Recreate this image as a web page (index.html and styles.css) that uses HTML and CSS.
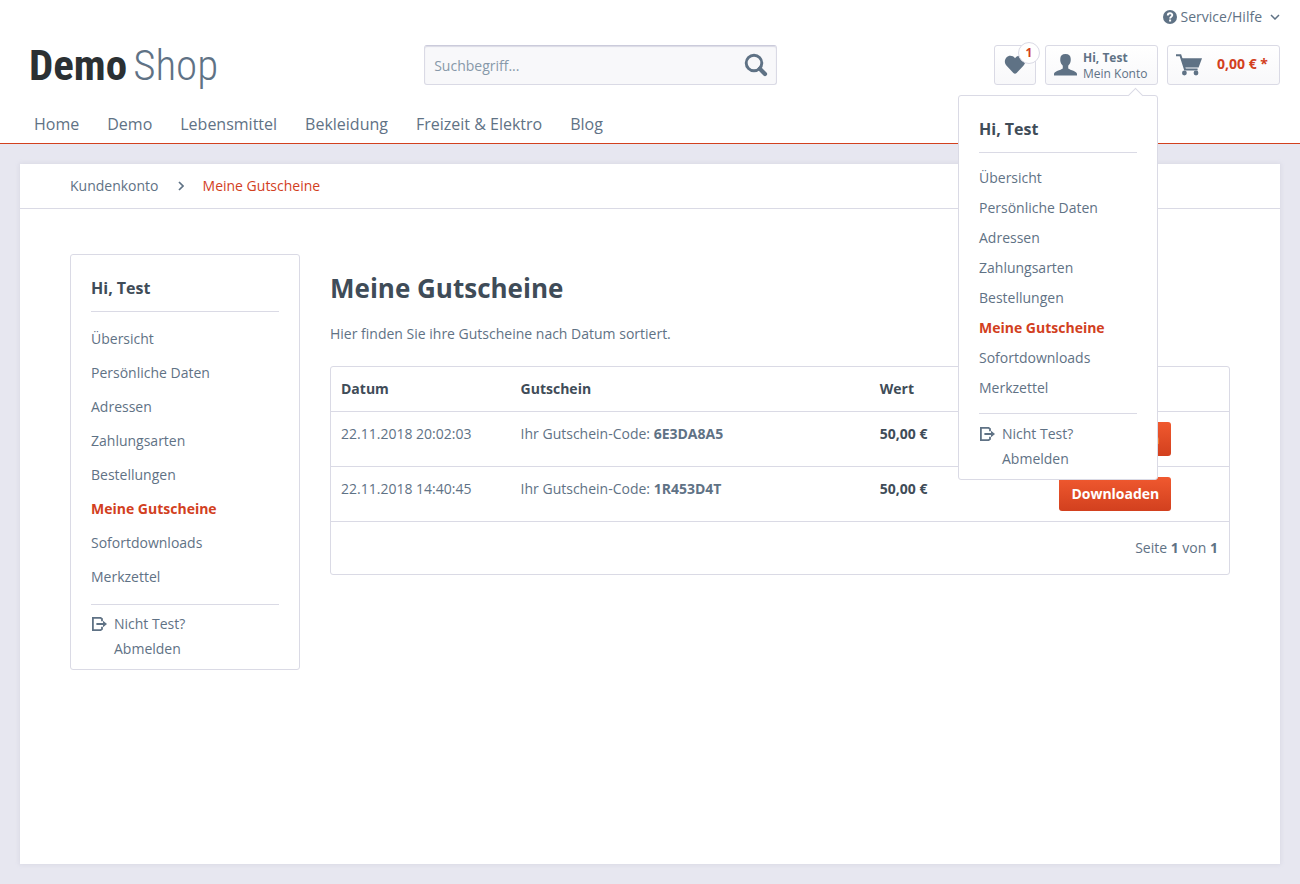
FILE: index.html
```html
<!DOCTYPE html>
<html lang="de">
<head>
<meta charset="utf-8">
<meta name="viewport" content="width=device-width, initial-scale=1">
<title>Meine Gutscheine | DemoShop</title>
<link rel="stylesheet" href="styles.css">
</head>
<body>
<header class="header">
  <div class="topbar">
    <button class="service" type="button">
      <svg width="14" height="14" viewBox="0 0 14 14" aria-hidden="true"><circle cx="7" cy="7" r="7" fill="currentColor"/><path d="M4.8 5.4C4.8 2.5 9.3 2.5 9.3 5.1C9.3 6.8 7.1 6.6 7.1 8.5" fill="none" stroke="#fff" stroke-width="1.9"/><rect x="6.1" y="9.5" width="2" height="2" fill="#fff"/></svg>
      <span>Service/Hilfe</span>
      <svg class="service-arrow" width="10" height="6" viewBox="0 0 10 6" aria-hidden="true"><path d="M1 1l4 4 4-4" fill="none" stroke="currentColor" stroke-width="1.5"/></svg>
    </button>
  </div>
  <div class="header-main">
    <a class="logo" href="#"><b>Demo</b><span>Shop</span></a>
    <form class="search" role="search">
      <input class="search-field" type="search" placeholder="Suchbegriff..." aria-label="Suchbegriff">
      <button class="search-button" type="button" aria-label="Suchen">
        <svg width="24" height="24" viewBox="0 0 24 24" fill="none" stroke="currentColor" aria-hidden="true"><circle cx="10" cy="10" r="7.8" stroke-width="2.9"/><path d="M15.8 15.8l5.2 5.2" stroke-width="4.2" stroke-linecap="round"/></svg>
      </button>
    </form>
    <div class="actions">
      <a class="action wishlist" href="#" aria-label="Merkzettel">
        <svg width="22" height="20" viewBox="0 0 22 20" fill="currentColor" aria-hidden="true"><path d="M11 3.2C8.8.2 4.6.1 2.4 2.5C.2 5 .4 8.4 2.6 10.8L9.4 18Q11 19.6 12.6 18L19.4 10.8C21.6 8.4 21.8 5 19.6 2.5C17.4.1 13.2.2 11 3.2Z"/></svg>
        <span class="badge">1</span>
      </a>
      <div class="account">
        <button class="action account-button" type="button" aria-expanded="true">
          <svg width="23" height="22" viewBox="0 0 22 22" preserveAspectRatio="none" fill="currentColor" aria-hidden="true"><path d="M11 0C14.2 0 16 1.8 16 4.8C16 6 16.1 6.6 15.8 7.8C15.4 9.6 14.6 10.6 13.6 11.8V14.6C15.6 16.3 22 17.4 22 20V21.5H0V20C0 17.4 6.4 16.3 8.4 14.6V11.8C7.4 10.6 6.6 9.6 6.2 7.8C5.9 6.6 6 6 6 4.8C6 1.8 7.8 0 11 0Z"/></svg>
          <span class="account-label"><b>Hi, Test</b><span>Mein Konto</span></span>
        </button>
        <nav class="menu dropdown" aria-label="Mein Konto">
          <h2 class="menu-title">Hi, Test</h2>
          <ul class="menu-list">
            <li><a href="#">Übersicht</a></li>
            <li><a href="#">Persönliche Daten</a></li>
            <li><a href="#">Adressen</a></li>
            <li><a href="#">Zahlungsarten</a></li>
            <li><a href="#">Bestellungen</a></li>
            <li><a class="active" href="#">Meine Gutscheine</a></li>
            <li><a href="#">Sofortdownloads</a></li>
            <li><a href="#">Merkzettel</a></li>
          </ul>
          <a class="logout" href="#">
            <svg width="15" height="14" viewBox="0 0 15 14" fill="none" stroke="currentColor" stroke-width="1.8" aria-hidden="true"><path d="M10 4.2V2L8.6.9H.9v12.2h7.7L10 12V9.8M4.4 7h8"/><path d="M11 3.8L15 7l-4 3.2z" fill="currentColor" stroke="none"/></svg>
            <span>Nicht Test?<br>Abmelden</span>
          </a>
        </nav>
      </div>
      <a class="action cart" href="#">
        <svg width="26" height="22" viewBox="0 0 26 22" aria-hidden="true"><path d="M0 1.2h4.4L9 15.4h12.6" fill="none" stroke="currentColor" stroke-width="2"/><path d="M5.6 4.2H26l-3.4 9.4H8.6z" fill="currentColor"/><circle cx="8.4" cy="19" r="2.4" fill="currentColor"/><circle cx="20" cy="19" r="2.4" fill="currentColor"/></svg>
        <span>0,00 € *</span>
      </a>
    </div>
  </div>
  <nav class="navigation" aria-label="Kategorien">
    <a href="#">Home</a>
    <a href="#">Demo</a>
    <a href="#">Lebensmittel</a>
    <a href="#">Bekleidung</a>
    <a href="#">Freizeit &amp; Elektro</a>
    <a href="#">Blog</a>
  </nav>
</header>
<main class="page">
  <nav class="breadcrumb" aria-label="Brotkrumen">
    <a href="#">Kundenkonto</a>
    <svg width="6" height="10" viewBox="0 0 6 10" aria-hidden="true"><path d="M1 1l4 4-4 4" fill="none" stroke="currentColor" stroke-width="1.7"/></svg>
    <a class="current" href="#" aria-current="page">Meine Gutscheine</a>
  </nav>
  <div class="content">
    <aside class="menu sidebar">
      <h2 class="menu-title">Hi, Test</h2>
      <ul class="menu-list">
        <li><a href="#">Übersicht</a></li>
        <li><a href="#">Persönliche Daten</a></li>
        <li><a href="#">Adressen</a></li>
        <li><a href="#">Zahlungsarten</a></li>
        <li><a href="#">Bestellungen</a></li>
        <li><a class="active" href="#">Meine Gutscheine</a></li>
        <li><a href="#">Sofortdownloads</a></li>
        <li><a href="#">Merkzettel</a></li>
      </ul>
      <a class="logout" href="#">
        <svg width="15" height="14" viewBox="0 0 15 14" fill="none" stroke="currentColor" stroke-width="1.8" aria-hidden="true"><path d="M10 4.2V2L8.6.9H.9v12.2h7.7L10 12V9.8M4.4 7h8"/><path d="M11 3.8L15 7l-4 3.2z" fill="currentColor" stroke="none"/></svg>
        <span>Nicht Test?<br>Abmelden</span>
      </a>
    </aside>
    <section class="vouchers">
      <h1>Meine Gutscheine</h1>
      <p class="intro">Hier finden Sie ihre Gutscheine nach Datum sortiert.</p>
      <div class="panel">
        <table class="voucher-table">
          <colgroup><col class="col-date"><col class="col-voucher"><col class="col-value"><col class="col-action"></colgroup>
          <thead>
            <tr><th scope="col">Datum</th><th scope="col">Gutschein</th><th scope="col">Wert</th><td></td></tr>
          </thead>
          <tbody>
            <tr><td>22.11.2018 20:02:03</td><td>Ihr Gutschein-Code: <b>6E3DA8A5</b></td><td class="value">50,00 €</td><td><button class="download" type="button">Downloaden</button></td></tr>
            <tr><td>22.11.2018 14:40:45</td><td>Ihr Gutschein-Code: <b>1R453D4T</b></td><td class="value">50,00 €</td><td><button class="download" type="button">Downloaden</button></td></tr>
          </tbody>
        </table>
        <p class="paging">Seite <b>1</b> von <b>1</b></p>
      </div>
    </section>
  </div>
</main>
</body>
</html>
```
FILE: styles.css
```css
:root {
  --text: #5f7285;
  --dark: #3f4c58;
  --accent: #d2401e;
  --line: #dadae5;
  --backdrop: #e7e7f0;
}

* {
  box-sizing: border-box;
}

body {
  display: flex;
  flex-direction: column;
  min-height: 100vh;
  margin: 0;
  background: var(--backdrop);
  color: var(--text);
  font: 14px/24px "Open Sans", "Noto Sans", sans-serif;
}

a {
  color: inherit;
  text-decoration: none;
}

button {
  padding: 0;
  border: 0;
  background: none;
  color: inherit;
  font: inherit;
  cursor: pointer;
}

h1,
h2,
p,
ul {
  margin: 0;
  padding: 0;
}

svg {
  flex: none;
}

.header {
  padding: 0 20px;
  border-bottom: 1px solid var(--accent);
  background: #fff;
}

.topbar {
  display: flex;
  justify-content: flex-end;
  padding: 5px 0;
}

.service {
  display: flex;
  align-items: center;
  gap: 4px;
}

.service-arrow {
  margin-left: 4px;
}

.header-main {
  display: flex;
  align-items: center;
  margin-top: 11px;
}

.logo {
  display: flex;
  gap: 6px;
  width: 32%;
  padding-left: 9px;
  color: var(--text);
  font: 300 43px/40px "Roboto Condensed", Roboto, sans-serif;
}

.logo b {
  color: #2b3033;
  font-weight: 700;
}

.search {
  position: relative;
  width: 28%;
  margin-left: 1px;
}

.search-field {
  display: block;
  width: 100%;
  height: 40px;
  padding: 0 50px 0 9px;
  border: 1px solid var(--line);
  border-top-color: #cbcbdb;
  border-radius: 3px;
  background: #f8f8fa;
  box-shadow: inset 0 1px 1px var(--line);
  color: var(--text);
  font: inherit;
}

.search-field::placeholder {
  color: #8798a9;
}

.search-button {
  position: absolute;
  top: 0;
  right: 0;
  display: grid;
  place-items: center;
  width: 42px;
  height: 40px;
}

.actions {
  display: flex;
  gap: 9px;
  margin-left: auto;
}

.action {
  display: flex;
  align-items: center;
  height: 40px;
  border: 1px solid var(--line);
  border-radius: 3px;
  background: linear-gradient(#fff, #f8f8fa);
}

.wishlist {
  position: relative;
  justify-content: center;
  width: 42px;
}

.badge {
  position: absolute;
  top: -4px;
  right: -5px;
  width: 22px;
  height: 22px;
  border: 1px solid var(--line);
  border-radius: 50%;
  background: #fff;
  color: var(--accent);
  font-size: 12px;
  font-weight: 700;
  line-height: 20px;
  text-align: center;
}

.account {
  position: relative;
}

.account-button {
  gap: 6px;
  width: 113px;
  padding-left: 8px;
}

.account-label {
  display: flex;
  flex-direction: column;
  padding-top: 2px;
  font-size: 12px;
  line-height: 16px;
  text-align: left;
}

.cart {
  justify-content: space-between;
  width: 113px;
  padding: 0 11px 0 8px;
}

.cart span {
  padding-bottom: 2px;
  color: var(--accent);
  font-weight: 700;
}

.navigation {
  display: flex;
  margin-top: 20px;
  font-size: 16px;
  line-height: 38px;
}

.navigation a {
  padding: 0 14px;
}

.menu {
  border: 1px solid var(--line);
  border-radius: 3px;
  background: #fff;
}

.menu-title {
  margin: 0 20px;
  padding: 21px 0 11px;
  border-bottom: 1px solid var(--line);
  color: var(--dark);
  font-size: 16px;
  line-height: 24px;
}

.menu-list {
  margin: 0 20px;
  padding: 10px 0;
  border-bottom: 1px solid var(--line);
  line-height: 34px;
  list-style: none;
}

.menu-list a {
  display: block;
}

.menu-list .active {
  color: var(--accent);
  font-weight: 700;
}

.logout {
  display: flex;
  gap: 7px;
  padding: 6px 21px 8px;
  line-height: 25px;
}

.logout svg {
  margin-top: 6px;
}

.dropdown {
  position: absolute;
  z-index: 2;
  top: 50px;
  right: 0;
  width: 200px;
}

.dropdown::before {
  content: "";
  position: absolute;
  top: -6px;
  right: 16px;
  width: 10px;
  height: 10px;
  border: solid var(--line);
  border-width: 1px 0 0 1px;
  background: #fff;
  transform: rotate(45deg);
}

.dropdown .menu-list {
  line-height: 30px;
}

.dropdown .logout {
  padding-top: 7px;
}

.page {
  flex: 1;
  margin: 20px;
  background: #fff;
  box-shadow: 0 0 4px 1px #dadae5;
}

.breadcrumb {
  display: flex;
  align-items: center;
  gap: 19px;
  padding: 10px 50px;
  border-bottom: 1px solid var(--line);
}

.current {
  color: var(--accent);
}

.content {
  display: flex;
  align-items: flex-start;
  gap: 30px;
  padding: 45px 50px;
}

.sidebar {
  flex: none;
  width: 230px;
}

.vouchers {
  flex: 1;
}

.vouchers h1 {
  padding-top: 18px;
  color: var(--dark);
  font-size: 26px;
  line-height: 32px;
}

.intro {
  padding: 18px 0 20px;
}

.panel {
  border: 1px solid var(--line);
  border-radius: 3px;
}

.voucher-table {
  width: 100%;
  border-spacing: 0;
  table-layout: fixed;
}

.voucher-table th,
.voucher-table td {
  padding: 10px;
  border-bottom: 1px solid var(--line);
  text-align: left;
  vertical-align: top;
}

.voucher-table th,
.voucher-table .value {
  color: var(--dark);
  font-weight: 700;
}

.col-date,
.col-value,
.col-action {
  width: 20%;
}

.col-voucher {
  width: 40%;
}

.download {
  display: block;
  padding: 0 12px;
  border-radius: 3px;
  background: linear-gradient(#f0592f, #d2401e);
  color: #fff;
  font-weight: 700;
  line-height: 34px;
}

.paging {
  padding: 14px 11px;
  text-align: right;
}
```
